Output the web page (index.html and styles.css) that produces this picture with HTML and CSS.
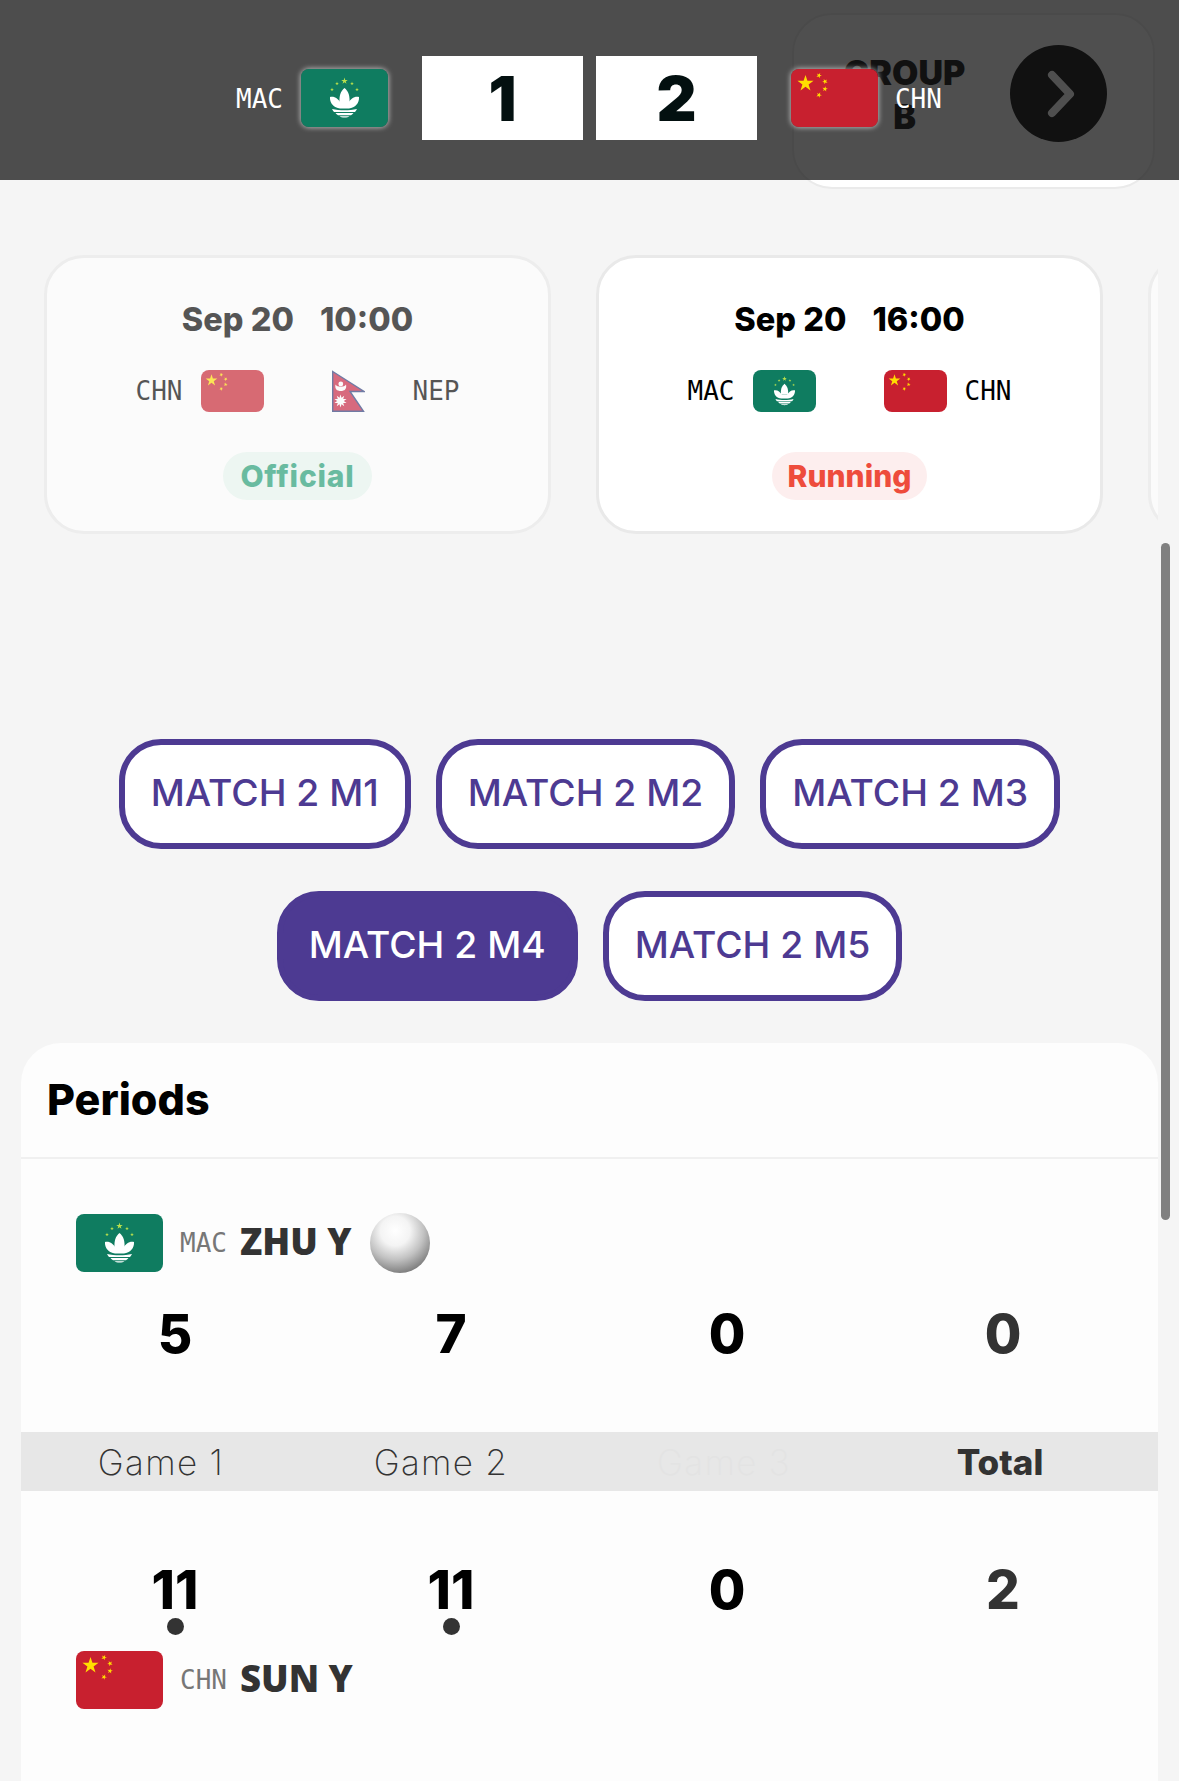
FILE: index.html
```html
<!DOCTYPE html>
<html lang="en">
<head>
<meta charset="utf-8">
<title>MAC vs CHN</title>
<link rel="stylesheet" href="styles.css">
</head>
<body>
<svg class="defs" aria-hidden="true">
  <defs>
    <path id="star" d="M0,-1L.225,-.309 .951,-.309 .363,.118 .588,.809 0,.382 -.588,.809 -.363,.118 -.951,-.309 -.225,-.309z"/>
    <symbol id="chn" viewBox="0 0 87 58">
      <rect width="87" height="58" fill="#c8202f"/>
      <use href="#star" fill="#ffde00" transform="translate(14.500 14.500) scale(8.500)"/>
      <use href="#star" fill="#ffde00" transform="translate(28 6.500) rotate(25) scale(2.900)"/>
      <use href="#star" fill="#ffde00" transform="translate(34 12.500) rotate(45) scale(2.900)"/>
      <use href="#star" fill="#ffde00" transform="translate(34 20) rotate(10) scale(2.900)"/>
      <use href="#star" fill="#ffde00" transform="translate(28 26) rotate(25) scale(2.900)"/>
    </symbol>
    <symbol id="mac" viewBox="0 0 87 58">
      <rect width="87" height="58" fill="#0f7c60"/>
      <use href="#star" fill="#b9e04c" transform="translate(43.500 12) scale(3.400)"/>
      <use href="#star" fill="#b9e04c" transform="translate(36 14.500) scale(2)"/>
      <use href="#star" fill="#b9e04c" transform="translate(51 14.500) scale(2)"/>
      <use href="#star" fill="#b9e04c" transform="translate(31 20.500) scale(2)"/>
      <use href="#star" fill="#b9e04c" transform="translate(56 20.500) scale(2)"/>
      <path fill="#fff" d="M43.500 19C47.500 22 49 27 48.500 34L38.500 34C38 27 39.500 22 43.500 19z"/>
      <path fill="#fff" d="M29 28C34 27 37 30 40 34L47 34C50 30 53 27 58 28 58.500 34 54 39 48 39.500L39 39.500C33 39 28.500 34 29 28z"/>
      <path fill="#fff" d="M31 40C35 41 39 41.300 43.500 41.300 48 41.300 52 41 56 40 55.500 41.200 54.800 42 54 43L33 43C32.200 42 31.500 41.200 31 40z"/>
      <path fill="#fff" d="M34.500 44L52.500 44C51.800 45 51 45.800 50 46.300L37 46.300C36 45.800 35.200 45 34.500 44z"/>
      <path fill="#fff" d="M38.500 47.300L48.500 47.300C47 49 40 49 38.500 47.300z"/>
    </symbol>
    <symbol id="nep" viewBox="0 0 33 42">
      <path fill="#c8203f" stroke="#2a3a7a" stroke-width="1.400" d="M.7 1.500L32 21.500 18 21.500 31.500 41.300 .7 41.300z"/>
      <path fill="#fff" d="M3.500 14.500C5 17.500 12.500 17.500 14 14.500 15 19 12.500 21 8.800 21 5 21 2.500 19 3.500 14.500z"/>
      <circle cx="8.800" cy="14" r="2.400" fill="#fff"/>
      <use href="#star" fill="#fff" transform="translate(8.500 31) scale(6.400)"/>
      <use href="#star" fill="#fff" transform="translate(8.500 31) rotate(36) scale(6.400)"/>
    </symbol>
  </defs>
</svg>

<header class="top">
  <div class="group-card">
    <div class="group-name">GROUP B</div>
    <div class="group-next">
      <svg class="chevron" viewBox="0 0 30 50" aria-hidden="true"><path d="M6 6L24 25 6 44" fill="none" stroke="#fff" stroke-width="8" stroke-linecap="round" stroke-linejoin="round"/></svg>
    </div>
  </div>
  <div class="scrim"></div>
  <div class="scorebar">
    <span class="code code-light">MAC</span>
    <svg class="flag flag-head flag-head-mac"><use href="#mac"/></svg>
    <div class="score-box score-box-first">1</div>
    <div class="score-box">2</div>
    <svg class="flag flag-head flag-head-chn"><use href="#chn"/></svg>
    <span class="code code-light">CHN</span>
  </div>
</header>

<section class="matches">
  <article class="match match-past">
    <div class="match-date"><span>Sep 20</span><span>10:00</span></div>
    <div class="match-teams">
      <div class="team"><span class="code">CHN</span><svg class="flag flag-card"><use href="#chn"/></svg></div>
      <div class="team"><span class="flag-slot"><svg class="flag-nep"><use href="#nep"/></svg></span><span class="code">NEP</span></div>
    </div>
    <div class="badge badge-official">Official</div>
  </article>
  <article class="match">
    <div class="match-date"><span>Sep 20</span><span>16:00</span></div>
    <div class="match-teams">
      <div class="team"><span class="code">MAC</span><svg class="flag flag-card"><use href="#mac"/></svg></div>
      <div class="team"><svg class="flag flag-card"><use href="#chn"/></svg><span class="code">CHN</span></div>
    </div>
    <div class="badge badge-running">Running</div>
  </article>
  <article class="match match-past"></article>
</section>

<nav class="tabs">
  <button class="tab">MATCH 2 M1</button>
  <button class="tab">MATCH 2 M2</button>
  <button class="tab">MATCH 2 M3</button>
  <button class="tab tab-active">MATCH 2 M4</button>
  <button class="tab">MATCH 2 M5</button>
</nav>

<main class="panel">
  <h2 class="panel-title">Periods</h2>
  <div class="player player-first">
    <svg class="flag flag-row"><use href="#mac"/></svg>
    <span class="player-code">MAC</span>
    <span class="player-name">ZHU Y</span>
    <span class="ball"></span>
  </div>
  <div class="scores scores-top">
    <div>5</div><div>7</div><div>0</div><div class="score-total">0</div>
  </div>
  <div class="band">
    <div>Game 1</div><div>Game 2</div><div class="band-faint">Game 3</div><div class="band-total">Total</div>
  </div>
  <div class="scores scores-bottom">
    <div>11<span class="won"></span></div><div>11<span class="won"></span></div><div>0</div><div class="score-total">2</div>
  </div>
  <div class="player">
    <svg class="flag flag-row"><use href="#chn"/></svg>
    <span class="player-code">CHN</span>
    <span class="player-name">SUN Y</span>
  </div>
</main>

<div class="scroll-thumb"></div>
</body>
</html>
```

FILE: styles.css
```css
* { box-sizing: border-box; }
html, body { height: 1781px; overflow: hidden; }
body {
  margin: 0;
  background: #f5f5f5;
  font-family: "Inter", "Liberation Sans", sans-serif;
  color: #000;
  position: relative;
}
.defs { position: absolute; width: 0; height: 0; }
.flag { display: block; border-radius: 8px; flex: none; }

/* header */
.top { position: relative; height: 180px; }
.group-card {
  position: absolute;
  left: 792px;
  top: 13px;
  width: 363px;
  height: 176px;
  background: #fff;
  border: 2px solid #eaeaea;
  border-radius: 40px;
  display: flex;
  align-items: center;
  padding: 0 46px 0 18px;
}
.group-name {
  width: 185px;
  font-size: 34px;
  font-weight: 900;
  line-height: 44px;
  text-align: center;
  color: #000;
  padding: 0 28px;
  margin-top: -12px;
  flex: none;
}
.group-next {
  margin-left: auto;
  margin-top: -15px;
  width: 97px;
  height: 97px;
  border-radius: 50%;
  background: #000;
  display: flex;
  align-items: center;
  justify-content: center;
}
.chevron { width: 30px; height: 50px; margin-left: 4px; }
.scrim { position: absolute; inset: 0; background: rgba(22, 22, 22, .755); }
.scorebar {
  position: absolute;
  inset: 0;
  display: flex;
  align-items: center;
  padding-left: 236px;
}
.code {
  font-family: "DejaVu Sans Mono", "Liberation Mono", monospace;
  font-size: 26px;
  color: #000;
}
.code-light { color: #fff; margin-top: 17px; }
.flag-head { width: 87px; height: 58px; margin-top: 16px; }
.flag-head-mac { margin-left: 18px; margin-right: 34px; box-shadow: 0 0 5px 1px rgba(255, 255, 255, .55); }
.flag-head-chn { margin-left: 34px; margin-right: 17px; box-shadow: 0 0 5px 1px rgba(255, 255, 255, .55); }
.score-box {
  width: 161px;
  height: 84px;
  margin-top: 16px;
  background: #fff;
  font-size: 62px;
  font-weight: 900;
  color: #031010;
  display: flex;
  align-items: center;
  justify-content: center;
}
.score-box-first { margin-right: 13px; }

/* match cards */
.matches {
  width: 1158px;
  margin-top: 75px;
  padding-left: 44px;
  display: flex;
  gap: 45px;
  overflow: hidden;
}
.match {
  flex: none;
  width: 507px;
  height: 279px;
  background: #fff;
  border: 3px solid #e9e9e9;
  border-radius: 40px;
  display: flex;
  flex-direction: column;
  align-items: center;
  padding-top: 42px;
}
.match-past { opacity: .65; }
.match-date {
  display: flex;
  gap: 26px;
  font-size: 32.5px;
  line-height: 40px;
  font-weight: 800;
}
.match-teams { display: flex; gap: 68px; margin-top: 30px; }
.team { display: flex; align-items: center; gap: 18px; }
.flag-card { width: 63px; height: 42px; }
.flag-slot { width: 63px; height: 42px; display: block; flex: none; }
.flag-nep { display: block; width: 33px; height: 42px; }
.badge {
  margin-top: 40px;
  height: 48px;
  padding: 0 16px;
  border-radius: 24px;
  font-size: 30px;
  line-height: 48px;
  font-weight: 800;
}
.badge-official { background: #e9f8f1; color: #1f9d74; letter-spacing: .8px; padding: 0 17px; }
.badge-running { background: #fdeeee; color: #ee4c3c; }

/* tabs */
.tabs {
  margin-top: 205px;
  padding: 0 21px;
  display: flex;
  flex-wrap: wrap;
  justify-content: center;
  gap: 42px 25px;
}
.tab {
  height: 110px;
  padding: 0 26px 3px;
  background: #fff;
  border: 6px solid #4d3a92;
  border-radius: 42px;
  color: #4d3a92;
  font-family: "Inter", "Liberation Sans", sans-serif;
  font-size: 37.3px;
  font-weight: 500;
}
.tab-active { background: #4d3a92; color: #fff; }

/* panel */
.panel {
  margin: 42px 21px 0;
  height: 740px;
  background: #fdfdfd;
  border-radius: 40px 40px 0 0;
}
.panel-title {
  margin: 0;
  height: 116px;
  padding: 30px 26px 0;
  border-bottom: 2px solid #f0f0f0;
  font-size: 43px;
  line-height: 52px;
  font-weight: 800;
}
.player { display: flex; align-items: center; padding-left: 55px; }
.player-first { margin-top: 54px; height: 60px; }
.flag-row { width: 87px; height: 58px; }
.player-code {
  margin-left: 17px;
  font-family: "DejaVu Sans Mono", "Liberation Mono", monospace;
  font-size: 26px;
  color: #777;
}
.player-name {
  margin: -4px 0 0 13px;
  font-family: "Noto Sans", "Liberation Sans", sans-serif;
  font-size: 36.5px;
  font-weight: 900;
  color: #333;
}
.ball {
  width: 60px;
  height: 60px;
  margin-left: 18px;
  border-radius: 50%;
  background: radial-gradient(circle 46px at 42% 30%, #fff 0, #f4f4f4 32%, #c2c2c2 62%, #6e6e6e 100%);
}
.scores {
  padding: 0 16px;
  display: grid;
  grid-template-columns: repeat(4, 276px);
  text-align: center;
  font-size: 53px;
  font-weight: 800;
  line-height: 64px;
}
.scores-top { margin-top: 29px; height: 130px; }
.scores-bottom { margin-top: 67px; height: 93px; }
.score-total { color: #333; }
.won {
  display: block;
  width: 17px;
  height: 17px;
  margin: -4px auto 0;
  border-radius: 50%;
  background: #333;
}
.band {
  height: 59px;
  background: #e7e7e7;
  display: grid;
  grid-template-columns: 280px 280px 286px 266px;
  align-items: center;
  text-align: center;
  font-size: 35px;
  font-weight: 200;
  letter-spacing: 1.3px;
  color: #333;
}
.band-faint { color: #e3e3e3; }
.band-total { font-size: 35px; font-weight: 800; letter-spacing: 0; }
.scroll-thumb {
  position: absolute;
  left: 1161px;
  top: 543px;
  width: 9px;
  height: 677px;
  border-radius: 5px;
  background: #808080;
}
```
